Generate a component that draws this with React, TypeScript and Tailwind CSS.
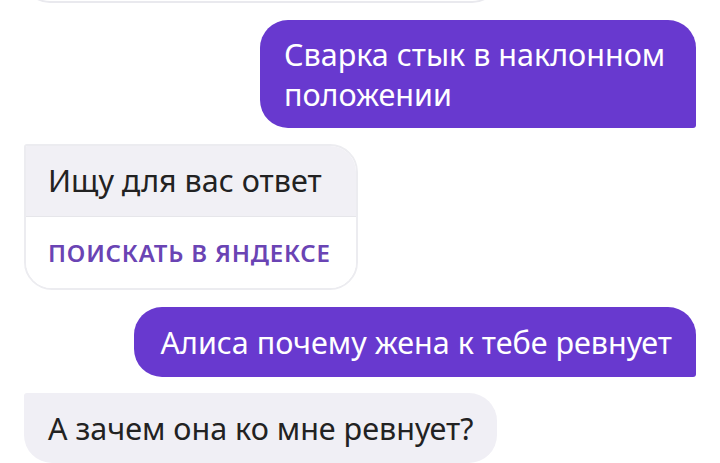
export default function App() {
  return (
    <div
      className="w-[720px] h-[463px] overflow-hidden bg-white flex flex-col"
      style={{ fontFamily: '"Noto Sans", "Open Sans", sans-serif' }}
    >
      {/* previous card, only its bottom edge visible */}
      <div className="ml-[22px] w-[478px] h-[30px] mt-[-27px] shrink-0 rounded-b-[28px] border-2 border-[#e9e9ee] bg-white" />

      <div className="flex justify-end pr-6 mt-[17px]">
        <div className="w-[436px] bg-[#6839cf] text-white text-[30.5px] leading-[40px] pl-6 pr-4 py-[14px] rounded-[28px] rounded-br-[3px]">
          Сварка стык в наклонном положении
        </div>
      </div>

      <div className="flex pl-6 mt-4">
        <div className="w-[334px] rounded-[28px] rounded-tl-[3px] overflow-hidden border-2 border-[#ececf0]">
          <div className="bg-[#f1f0f5] h-[70px] px-[22px] flex items-center text-[30.5px] text-[#222]">
            Ищу для вас ответ
          </div>
          <div className="bg-white h-[72px] px-[22px] flex items-center border-t border-[#e6e6ea] text-[24px] font-semibold tracking-[0.8px] whitespace-nowrap text-[#6a44b4]">
            ПОИСКАТЬ В ЯНДЕКСЕ
          </div>
        </div>
      </div>

      <div className="flex justify-end pr-6 mt-[17px]">
        <div className="bg-[#6839cf] text-white text-[30.5px] leading-[40px] pl-[27px] pr-6 py-[15px] rounded-[28px] rounded-br-[3px]">
          Алиса почему жена к тебе ревнует
        </div>
      </div>

      <div className="flex pl-6 mt-4">
        <div className="bg-[#f0eff5] text-[#222] text-[30.5px] leading-[40px] px-6 py-[15px] rounded-[28px] rounded-tl-[3px]">
          А зачем она ко мне ревнует?
        </div>
      </div>
    </div>
  )
}
